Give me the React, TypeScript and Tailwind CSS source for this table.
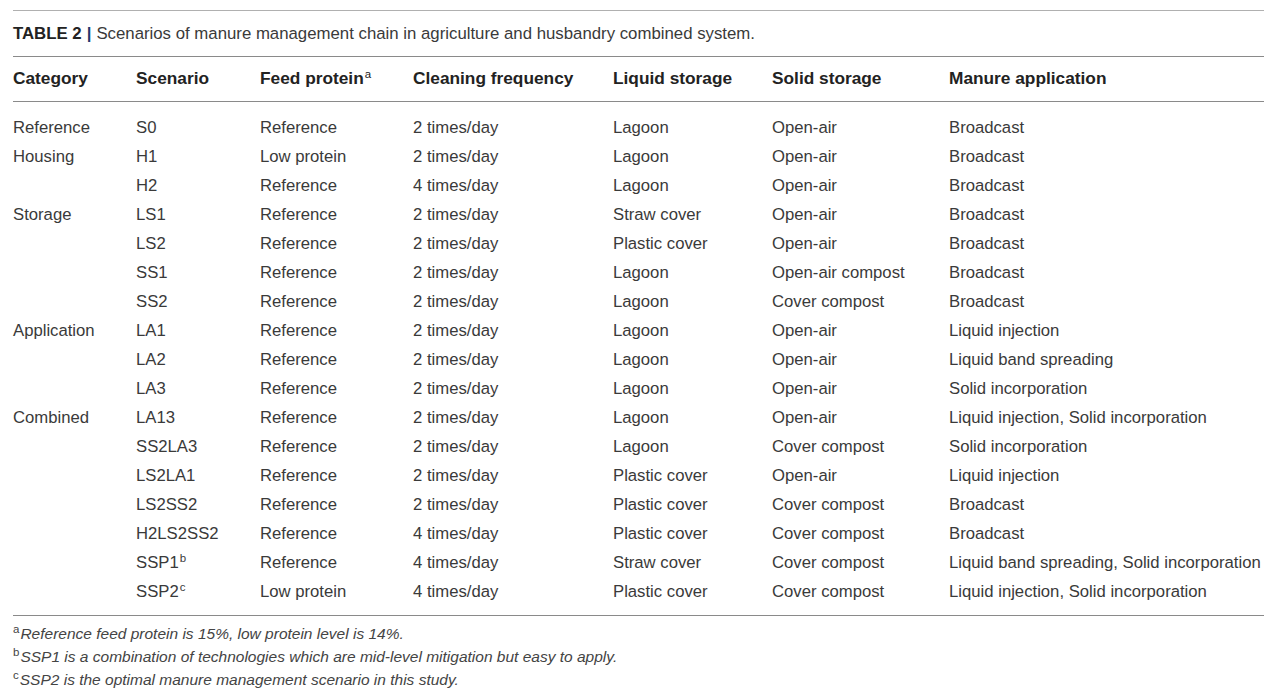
import React from 'react';

type Row = {
  category?: string;
  scenario: string;
  note?: string;
  protein: string;
  cleaning: string;
  liquid: string;
  solid: string;
  application: string;
};

const rows: Row[] = [
  { category: 'Reference', scenario: 'S0', protein: 'Reference', cleaning: '2 times/day', liquid: 'Lagoon', solid: 'Open-air', application: 'Broadcast' },
  { category: 'Housing', scenario: 'H1', protein: 'Low protein', cleaning: '2 times/day', liquid: 'Lagoon', solid: 'Open-air', application: 'Broadcast' },
  { scenario: 'H2', protein: 'Reference', cleaning: '4 times/day', liquid: 'Lagoon', solid: 'Open-air', application: 'Broadcast' },
  { category: 'Storage', scenario: 'LS1', protein: 'Reference', cleaning: '2 times/day', liquid: 'Straw cover', solid: 'Open-air', application: 'Broadcast' },
  { scenario: 'LS2', protein: 'Reference', cleaning: '2 times/day', liquid: 'Plastic cover', solid: 'Open-air', application: 'Broadcast' },
  { scenario: 'SS1', protein: 'Reference', cleaning: '2 times/day', liquid: 'Lagoon', solid: 'Open-air compost', application: 'Broadcast' },
  { scenario: 'SS2', protein: 'Reference', cleaning: '2 times/day', liquid: 'Lagoon', solid: 'Cover compost', application: 'Broadcast' },
  { category: 'Application', scenario: 'LA1', protein: 'Reference', cleaning: '2 times/day', liquid: 'Lagoon', solid: 'Open-air', application: 'Liquid injection' },
  { scenario: 'LA2', protein: 'Reference', cleaning: '2 times/day', liquid: 'Lagoon', solid: 'Open-air', application: 'Liquid band spreading' },
  { scenario: 'LA3', protein: 'Reference', cleaning: '2 times/day', liquid: 'Lagoon', solid: 'Open-air', application: 'Solid incorporation' },
  { category: 'Combined', scenario: 'LA13', protein: 'Reference', cleaning: '2 times/day', liquid: 'Lagoon', solid: 'Open-air', application: 'Liquid injection, Solid incorporation' },
  { scenario: 'SS2LA3', protein: 'Reference', cleaning: '2 times/day', liquid: 'Lagoon', solid: 'Cover compost', application: 'Solid incorporation' },
  { scenario: 'LS2LA1', protein: 'Reference', cleaning: '2 times/day', liquid: 'Plastic cover', solid: 'Open-air', application: 'Liquid injection' },
  { scenario: 'LS2SS2', protein: 'Reference', cleaning: '2 times/day', liquid: 'Plastic cover', solid: 'Cover compost', application: 'Broadcast' },
  { scenario: 'H2LS2SS2', protein: 'Reference', cleaning: '4 times/day', liquid: 'Plastic cover', solid: 'Cover compost', application: 'Broadcast' },
  { scenario: 'SSP1', note: 'b', protein: 'Reference', cleaning: '4 times/day', liquid: 'Straw cover', solid: 'Cover compost', application: 'Liquid band spreading, Solid incorporation' },
  { scenario: 'SSP2', note: 'c', protein: 'Low protein', cleaning: '4 times/day', liquid: 'Plastic cover', solid: 'Cover compost', application: 'Liquid injection, Solid incorporation' },
];

const footnotes = [
  { mark: 'a', text: 'Reference feed protein is 15%, low protein level is 14%.' },
  { mark: 'b', text: 'SSP1 is a combination of technologies which are mid-level mitigation but easy to apply.' },
  { mark: 'c', text: 'SSP2 is the optimal manure management scenario in this study.' },
];

const cols = 'grid grid-cols-[123px_124px_153px_200px_159px_177px_1fr]';

export default function App() {
  return (
    <div className="min-h-[696px] bg-white pl-[13px] pt-[10px] font-['Liberation_Sans',Arial,sans-serif] text-[#3a3a3a]">
      <div className="w-[1251px]">
        {/* Caption */}
        <div className="flex h-[46px] items-center border-t border-[#b0b0b0] pt-[1px] text-[16.8px]">
          <span className="font-bold text-[#222]">TABLE 2</span>
          <span className="mx-[5px] font-bold text-[#1f3a6e]">|</span>
          <span>
            Scenarios of manure management chain in agriculture and husbandry
            combined system.
          </span>
        </div>

        {/* Header */}
        <div
          className={`${cols} h-[46px] items-center border-y border-[#8a8a8a] text-[17.3px] font-bold text-[#222]`}
        >
          <div>Category</div>
          <div>Scenario</div>
          <div>
            Feed protein
            <sup className="ml-[1px] text-[11.5px] font-normal">a</sup>
          </div>
          <div>Cleaning frequency</div>
          <div>Liquid storage</div>
          <div>Solid storage</div>
          <div>Manure application</div>
        </div>

        {/* Body */}
        <div className="border-b border-[#8a8a8a] pt-[11px] pb-[9px] text-[16.7px]">
          {rows.map((row) => (
            <div key={row.scenario} className={`${cols} h-[29px] items-center`}>
              <div>{row.category ?? ''}</div>
              <div>
                {row.scenario}
                {row.note && <sup className="ml-[1px] text-[11.5px]">{row.note}</sup>}
              </div>
              <div>{row.protein}</div>
              <div>{row.cleaning}</div>
              <div>{row.liquid}</div>
              <div>{row.solid}</div>
              <div className="whitespace-nowrap">{row.application}</div>
            </div>
          ))}
        </div>

        {/* Footnotes */}
        <div className="pt-[6px] text-[15.5px] text-[#444]">
          {footnotes.map((f) => (
            <div key={f.mark} className="h-[23px] leading-[23px]">
              <sup className="mr-[1px] text-[11.5px]">{f.mark}</sup>
              <span className="italic">{f.text}</span>
            </div>
          ))}
        </div>
      </div>
    </div>
  );
}
